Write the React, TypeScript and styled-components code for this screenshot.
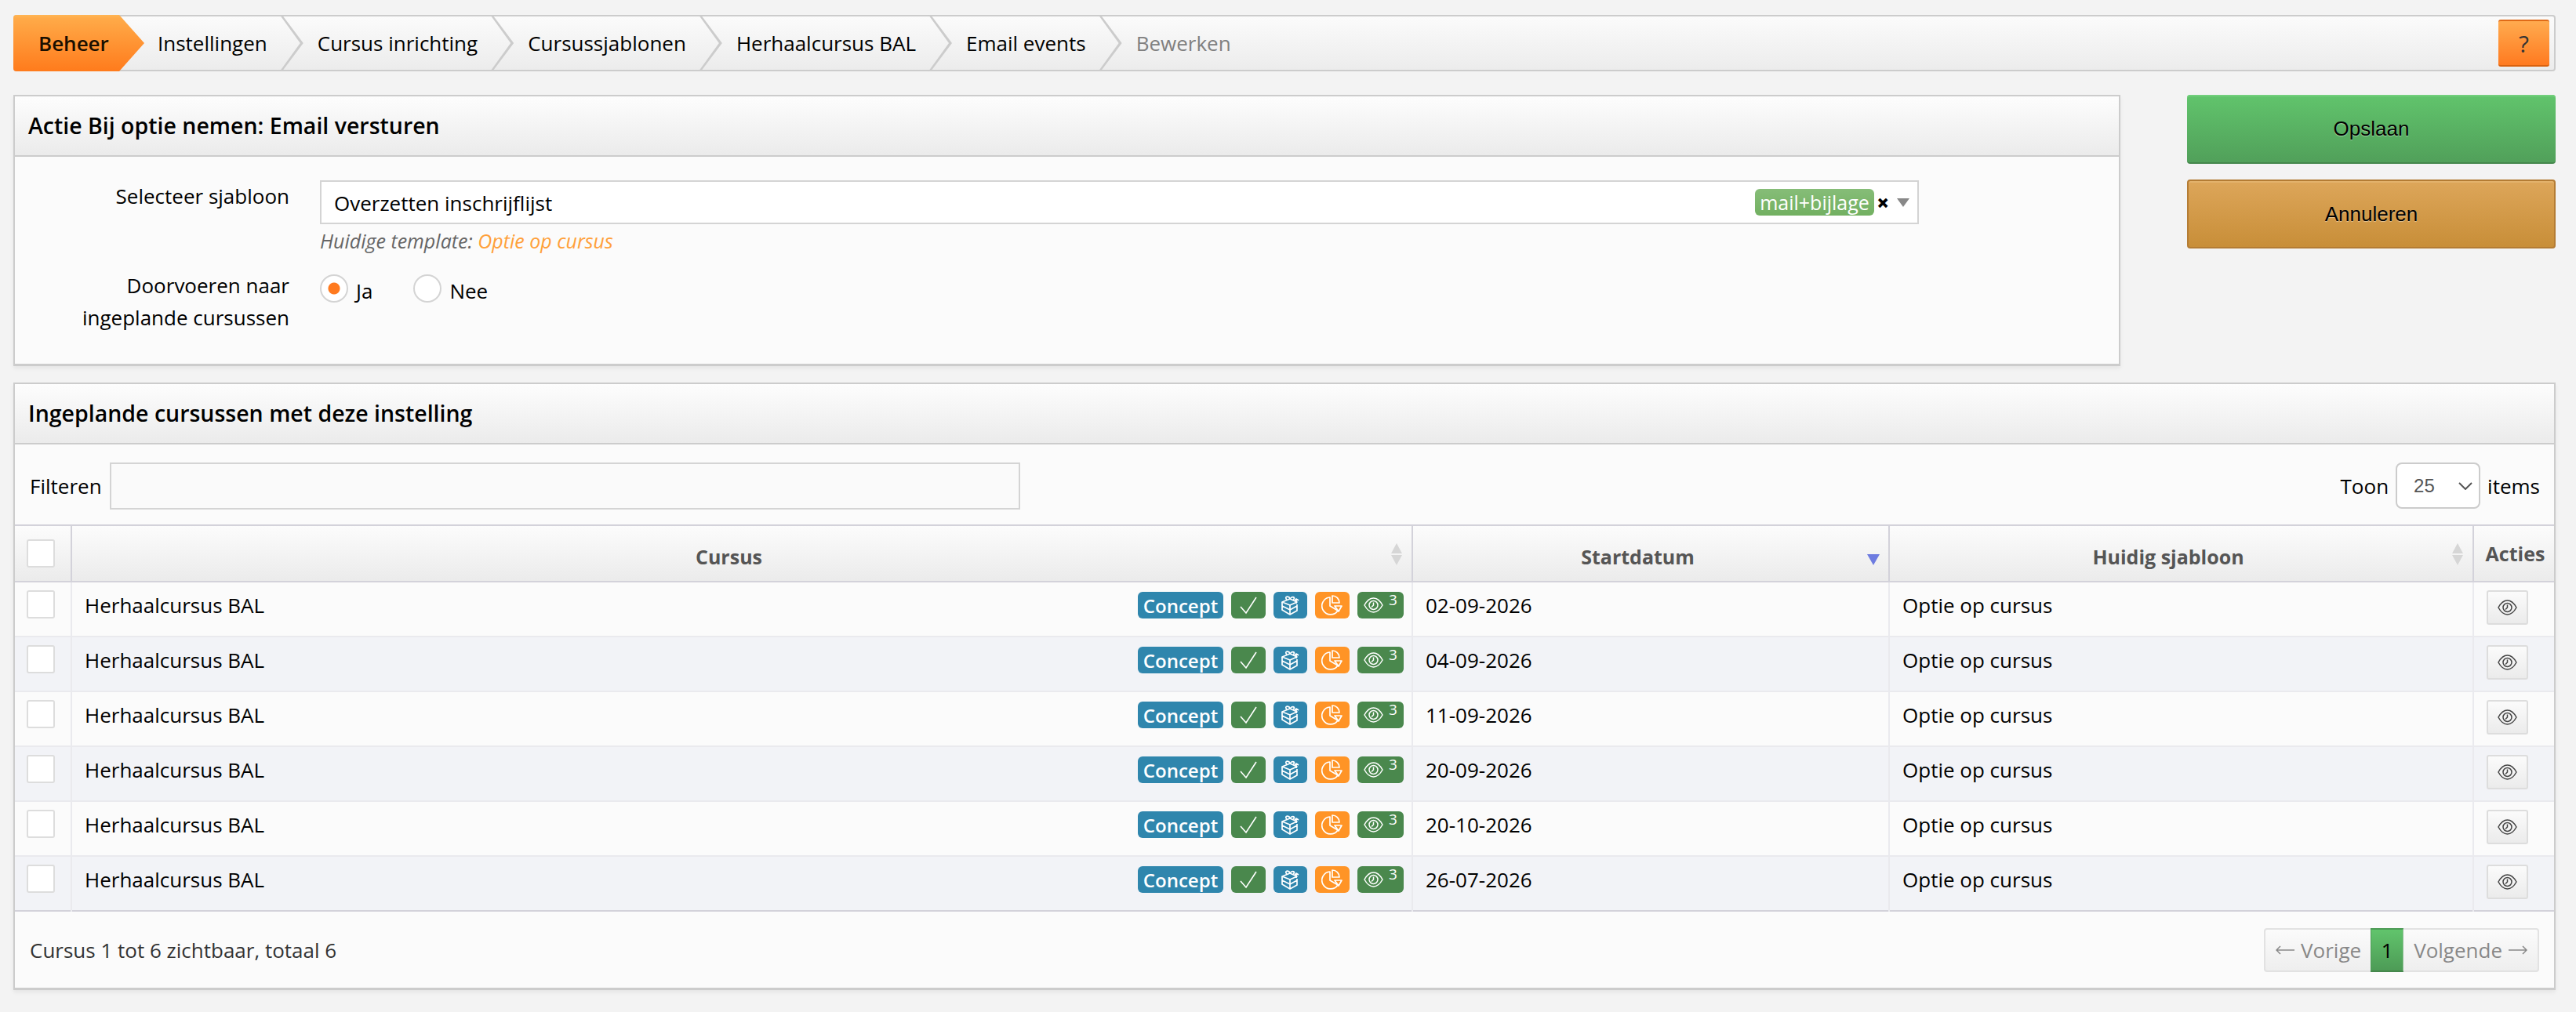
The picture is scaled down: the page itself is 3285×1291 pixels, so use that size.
import React from "react";
import styled, { createGlobalStyle } from "styled-components";

const GlobalStyle = createGlobalStyle`
  html, body {
    margin: 0;
    padding: 0;
    background: #f3f3f3;
  }
  body {
    font-family: "Open Sans", "Liberation Sans", sans-serif;
    font-size: 26px;
    color: #000;
  }
  * {
    box-sizing: border-box;
  }
`;

const Page = styled.div`
  width: 3285px;
  height: 1291px;
  padding: 19px 26px 0 17px;
  display: flex;
  flex-direction: column;
  overflow: hidden;
`;

const TopBar = styled.nav`
  height: 72px;
  display: flex;
  align-items: stretch;
  justify-content: space-between;
  border: 2px solid #ccc;
  border-left: none;
  border-radius: 4px;
  background: linear-gradient(#fbfbfb, #ececec);
`;

const Crumbs = styled.ol`
  list-style: none;
  margin: -2px 0;
  padding: 0;
  display: flex;
`;

const Crumb = styled.li<{ $muted?: boolean }>`
  position: relative;
  display: flex;
  align-items: center;
  height: 72px;
  margin-right: 48px;
  padding-right: 16px;
  white-space: nowrap;
  color: ${(p) => (p.$muted ? "#808080" : "#000")};

  &:not(:last-child)::after {
    content: "";
    position: absolute;
    z-index: 1;
    top: 0;
    left: 100%;
    width: 30px;
    height: 72px;
    background: #ccc;
    clip-path: polygon(0 0, 3px 0, 30px 50%, 3px 100%, 0 100%, 26px 50%);
  }
`;

const ActiveCrumb = styled.li`
  position: relative;
  z-index: 2;
  display: flex;
  align-items: center;
  width: 167px;
  height: 72px;
  margin-right: 17px;
  padding-left: 32px;
  border-radius: 4px 0 0 4px;
  font-weight: 600;
  color: #1a0f00;
  background: linear-gradient(#ffb655 0, #ffaa48 6%, #ff7b1c 100%);
  clip-path: polygon(0 0, 135px 0, 167px 50%, 135px 100%, 0 100%);
`;

const HelpButton = styled.button`
  width: 65px;
  height: 60px;
  margin: 4px 6px 0 0;
  padding: 0;
  border: none;
  border-top: 2px solid #e06b17;
  border-bottom: 2px solid #d9620f;
  border-radius: 3px;
  font-family: inherit;
  font-size: 30px;
  color: #333;
  background: linear-gradient(#ffab4f, #ff7a20);
`;

const MainRow = styled.div`
  display: flex;
  justify-content: space-between;
  margin-top: 30px;
`;

const Panel = styled.section<{ $grow?: boolean }>`
  width: ${(p) => (p.$grow ? "100%" : "2687px")};
  border: 2px solid #ccc;
  border-bottom-width: 3px;
  background: #fbfbfb;
  box-shadow: 0 3px 5px rgba(0, 0, 0, 0.06);
`;

const PanelHeader = styled.h2`
  margin: 0;
  height: 77px;
  padding: 0 17px 2px;
  display: flex;
  align-items: center;
  font-size: 28.5px;
  font-weight: 600;
  border-bottom: 2px solid #ccc;
  background: linear-gradient(#fdfdfd, #ebebeb);
`;

const FormBody = styled.div`
  height: 264px;
  padding: 30px 0 0;
  display: flex;
  flex-direction: column;
  gap: 21px;
`;

const FormRow = styled.div`
  display: flex;
  gap: 39px;
`;

const FormLabel = styled.div`
  width: 350px;
  text-align: right;
  line-height: 41px;
  flex: none;
`;

const FormField = styled.div`
  display: flex;
  flex-direction: column;
`;

const SelectBox = styled.div`
  position: relative;
  width: 2039px;
  height: 56px;
  display: flex;
  align-items: center;
  padding-left: 16px;
  background: #fff;
  border: 2px solid #d4d4d4;
`;

const SelectValue = styled.span`
  flex: 1;
  margin-top: 2px;
`;

const MailTag = styled.span`
  height: 34px;
  width: 152px;
  margin-right: 3px;
  display: flex;
  align-items: center;
  justify-content: center;
  border-radius: 6px;
  font-size: 25px;
  color: #fff;
  background: linear-gradient(#86bd78, #72b061);
`;

const ClearIcon = styled.span`
  width: 16px;
  font-size: 28px;
  font-weight: 800;
  line-height: 1;
  text-align: center;
  color: #000;
`;

const Caret = styled.span`
  width: 0;
  height: 0;
  margin: 0 10px 0 10px;
  border-left: 8px solid transparent;
  border-right: 8px solid transparent;
  border-top: 11px solid #888;
`;

const HelpText = styled.div`
  margin-top: 5px;
  font-size: 25px;
  line-height: 32px;
  font-style: italic;
  color: #666;
`;

const HelpLink = styled.span`
  color: #ffa03a;
`;

const RadioGroup = styled.div`
  display: flex;
  align-items: flex-start;
  gap: 52px;
  padding-top: 6px;
`;

const RadioOption = styled.label`
  display: flex;
  align-items: center;
  gap: 10px;
  height: 36px;
`;

const RadioDot = styled.span<{ $checked?: boolean }>`
  width: 36px;
  height: 36px;
  border-radius: 50%;
  border: 2px solid #d4d4d4;
  background: ${(p) =>
    p.$checked ? "radial-gradient(circle, #ff7a1f 0 7px, #fff 8px)" : "#fff"};
`;

const RadioText = styled.span`
  margin-top: 6px;
`;

const ActionColumn = styled.div`
  width: 470px;
  display: flex;
  flex-direction: column;
  gap: 20px;
`;

const ActionButton = styled.button<{ $tone: "green" | "amber" }>`
  height: 88px;
  border-radius: 4px;
  padding: 0;
  font-family: "Liberation Sans", Arial, sans-serif;
  font-size: 26px;
  color: #000;
  text-shadow: 0 1px 1px rgba(255, 255, 255, 0.45);
  border: ${(p) => (p.$tone === "amber" ? "2px solid #b47c34" : "none")};
  border-bottom: 2px solid ${(p) => (p.$tone === "green" ? "#45874c" : "#b47c34")};
  box-shadow: inset 0 2px 0 ${(p) => (p.$tone === "green" ? "#72cf7c" : "#e3b26c")};
  background: ${(p) =>
    p.$tone === "green"
      ? "linear-gradient(#61c46c, #51a05a)"
      : "linear-gradient(#dda65a, #c88e38)"};
`;

const TablePanel = styled(Panel)`
  margin-top: 21px;
  height: 775px;
`;

const Toolbar = styled.div`
  height: 102px;
  display: flex;
  align-items: center;
  justify-content: space-between;
  padding: 3px 18px 0 19px;
`;

const FilterGroup = styled.div`
  display: flex;
  align-items: center;
  gap: 10px;
`;

const FilterInput = styled.div`
  width: 1161px;
  height: 60px;
  background: #fafafa;
  border: 2px solid #d4d4d4;
`;

const PageSize = styled.div`
  display: flex;
  align-items: center;
  gap: 9px;
`;

const PageSelect = styled.div`
  width: 108px;
  height: 59px;
  padding: 0 8px 0 21px;
  display: flex;
  align-items: center;
  justify-content: space-between;
  border: 2px solid #ccc;
  border-radius: 8px;
  background: #fff;
  font-family: "Liberation Sans", Arial, sans-serif;
  font-size: 24px;
  color: #555;
`;

const Table = styled.table`
  width: 100%;
  table-layout: fixed;
  border-collapse: collapse;
  border-top: 2px solid #d3d2da;
  border-bottom: 2px solid #d3d2da;
`;

const HeadCell = styled.th<{ $width?: number; $sortable?: boolean }>`
  position: relative;
  width: ${(p) => (p.$width ? `${p.$width}px` : "auto")};
  height: 72px;
  padding: ${(p) => (p.$sortable ? "8px 33px 0 0" : "0 0 0 3px")};
  font-size: 25px;
  font-weight: 700;
  color: #555;
  text-align: center;
  background: linear-gradient(#fcfcfc, #ebebeb);
  border-left: 2px solid #d3d2da;
  border-bottom: 2px solid #d3d2da;

  &:first-child {
    border-left: none;
    padding: 0 0 0 15px;
  }
`;

const SortIcon = styled.svg`
  position: absolute;
  right: 11px;
  top: 21px;
  width: 16px;
  height: 30px;
`;

const Row = styled.tr<{ $stripe: boolean }>`
  height: 70px;
  background: ${(p) => (p.$stripe ? "#f2f3f7" : "#fbfbfb")};
  border-top: 2px solid #eaeaee;
`;

const Cell = styled.td`
  padding: 0 16px 10px;
  border-left: 2px solid #eaeaee;
  vertical-align: middle;

  &:first-child {
    border-left: none;
  }
`;

const CheckCell = styled(Cell)`
  padding: 0 0 12px 15px;
`;

const CheckBox = styled.span`
  display: block;
  width: 36px;
  height: 36px;
  background: #fff;
  border: 2px solid #ddd;
  border-radius: 3px;
`;

const CourseLine = styled.div`
  display: flex;
  align-items: center;
  justify-content: space-between;
  margin-right: -6px;
`;

const Badges = styled.div`
  display: flex;
  gap: 10px;
`;

const Badge = styled.span<{ $bg: string; $width: number }>`
  display: flex;
  align-items: center;
  justify-content: center;
  width: ${(p) => p.$width}px;
  height: 34px;
  border-radius: 6px;
  color: #fff;
  font-size: 24px;
  font-weight: 600;
  background: ${(p) => p.$bg};

  svg {
    display: block;
  }
`;

const BadgeCount = styled.sup`
  font-size: 19px;
  line-height: 1;
  font-weight: 400;
  margin: -14px 0 0 7px;
`;

const RowButton = styled.span`
  display: flex;
  align-items: center;
  justify-content: center;
  width: 53px;
  height: 44px;
  margin: 6px 0 0;
  border: 2px solid #ddd;
  border-radius: 3px;
  background: linear-gradient(#fbfbfb, #ebebeb);
`;

const Footer = styled.div`
  height: 97px;
  display: flex;
  align-items: center;
  justify-content: space-between;
  padding: 0 19px;
  color: #333;
`;

const Pager = styled.div`
  height: 56px;
  display: flex;
  font-size: 26px;
  color: #888;
`;

const PagerLink = styled.span<{ $side: "left" | "right" }>`
  display: flex;
  align-items: center;
  gap: 8px;
  padding: ${(p) => (p.$side === "left" ? "0 12px 0 13px" : "0 13px")};
  border: 2px solid #e2e2e2;
  border-${(p) => (p.$side === "left" ? "right" : "left")}: none;
  border-radius: ${(p) => (p.$side === "left" ? "4px 0 0 4px" : "0 4px 4px 0")};
  background: linear-gradient(#fbfbfb, #eeeeee);
`;

const PagerCurrent = styled.span`
  width: 42px;
  display: flex;
  align-items: center;
  justify-content: center;
  color: #000;
  background: linear-gradient(#61c46c, #4d9b56);
  border-top: 2px solid #4d9b56;
  border-bottom: 2px solid #45874c;
  border-left: 1px solid #4d9b56;
  border-right: 1px solid #8fbf94;
`;

const CheckGlyph = () => (
  <svg width="26" height="24" viewBox="0 0 26 24" fill="none" stroke="#fff" strokeWidth="1.6">
    <path d="M3 14l7 8L23 2" />
  </svg>
);

const BoxGlyph = () => (
  <svg width="28" height="26" viewBox="0 0 28 26" fill="none" stroke="#fff" strokeWidth="1.7" strokeLinejoin="round">
    <path d="M3 9l10-4 9 4-9 4z" />
    <path d="M3 9v5l10 5 9-5M3 14v5l10 6 9-5v-8" />
    <path d="M13 13v12" />
    <path d="M9 6c-3-3 0-5 3-3l1 2 2-2c3-1 5 1 2 3" />
    <path d="M21 11V5l-2 2M21 5l3 2" />
  </svg>
);

const PieGlyph = () => (
  <svg width="28" height="26" viewBox="0 0 28 26" fill="none" stroke="#fff" strokeWidth="1.7" strokeLinejoin="round">
    <path d="M11 3a11 11 0 1 0 10 17l-10-6z" />
    <path d="M14 1c5 0 9 4 9 9h-9z" />
    <path d="M17 14h9l-4 7z" />
  </svg>
);

const EyeGlyph = ({ color = "#fff" }: { color?: string }) => (
  <svg width="25" height="20" viewBox="0 0 25 20" fill="none" stroke={color} strokeWidth="1.5">
    <path d="M1 10c3-5.500 7-9 11.500-9S21 4.500 24 10c-3 5.500-7 9-11.500 9S4 15.500 1 10z" />
    <circle cx="12.500" cy="10" r="5.500" />
    <path d="M12.500 6.500V10L10 12.500" />
  </svg>
);

const ArrowLeft = () => (
  <svg width="24" height="12" viewBox="0 0 24 12" fill="none" stroke="#888" strokeWidth="1.5">
    <path d="M24 6H1M6 1L1 6l5 5" />
  </svg>
);

const ArrowRight = () => (
  <svg width="24" height="12" viewBox="0 0 24 12" fill="none" stroke="#888" strokeWidth="1.5">
    <path d="M0 6h23M18 1l5 5-5 5" />
  </svg>
);

const crumbs = [
  "Instellingen",
  "Cursus inrichting",
  "Cursussjablonen",
  "Herhaalcursus BAL",
  "Email events",
];

const dates = [
  "02-09-2026",
  "04-09-2026",
  "11-09-2026",
  "20-09-2026",
  "20-10-2026",
  "26-07-2026",
];

const Sort = () => (
  <SortIcon viewBox="0 0 16 30">
    <path d="M8 1l7 13H1zM8 29L1 16h14z" fill="#d6d6d6" />
  </SortIcon>
);

export default function App() {
  return (
    <Page>
      <GlobalStyle />
      <TopBar>
        <Crumbs>
          <ActiveCrumb>Beheer</ActiveCrumb>
          {crumbs.map((c) => (
            <Crumb key={c}>{c}</Crumb>
          ))}
          <Crumb $muted>Bewerken</Crumb>
        </Crumbs>
        <HelpButton>?</HelpButton>
      </TopBar>

      <MainRow>
        <Panel>
          <PanelHeader>Actie Bij optie nemen: Email versturen</PanelHeader>
          <FormBody>
            <FormRow>
              <FormLabel>Selecteer sjabloon</FormLabel>
              <FormField>
                <SelectBox>
                  <SelectValue>Overzetten inschrijflijst</SelectValue>
                  <MailTag>mail+bijlage</MailTag>
                  <ClearIcon>×</ClearIcon>
                  <Caret />
                </SelectBox>
                <HelpText>
                  Huidige template: <HelpLink>Optie op cursus</HelpLink>
                </HelpText>
              </FormField>
            </FormRow>
            <FormRow>
              <FormLabel>
                Doorvoeren naar
                <br />
                ingeplande cursussen
              </FormLabel>
              <RadioGroup>
                <RadioOption>
                  <RadioDot $checked />
                  <RadioText>Ja</RadioText>
                </RadioOption>
                <RadioOption>
                  <RadioDot />
                  <RadioText>Nee</RadioText>
                </RadioOption>
              </RadioGroup>
            </FormRow>
          </FormBody>
        </Panel>
        <ActionColumn>
          <ActionButton $tone="green">Opslaan</ActionButton>
          <ActionButton $tone="amber">Annuleren</ActionButton>
        </ActionColumn>
      </MainRow>

      <TablePanel $grow>
        <PanelHeader>Ingeplande cursussen met deze instelling</PanelHeader>
        <Toolbar>
          <FilterGroup>
            Filteren
            <FilterInput />
          </FilterGroup>
          <PageSize>
            Toon
            <PageSelect>
              25
              <svg width="18" height="10" viewBox="0 0 18 10" fill="none" stroke="#555" strokeWidth="2">
                <path d="M1 1l8 8 8-8" />
              </svg>
            </PageSelect>
            items
          </PageSize>
        </Toolbar>
        <Table>
          <thead>
            <tr>
              <HeadCell $width={72}>
                <CheckBox />
              </HeadCell>
              <HeadCell $width={1710} $sortable>
                Cursus
                <Sort />
              </HeadCell>
              <HeadCell $width={608} $sortable>
                Startdatum
                <SortIcon viewBox="0 0 16 30">
                  <path d="M0 15h16l-8 14z" fill="#6e7ce0" />
                </SortIcon>
              </HeadCell>
              <HeadCell $width={745} $sortable>
                Huidig sjabloon
                <Sort />
              </HeadCell>
              <HeadCell>Acties</HeadCell>
            </tr>
          </thead>
          <tbody>
            {dates.map((date, i) => (
              <Row key={i} $stripe={i % 2 === 1}>
                <CheckCell>
                  <CheckBox />
                </CheckCell>
                <Cell>
                  <CourseLine>
                    Herhaalcursus BAL
                    <Badges>
                      <Badge $bg="#2f86ad" $width={109}>Concept</Badge>
                      <Badge $bg="#4a884d" $width={44}><CheckGlyph /></Badge>
                      <Badge $bg="#2f86ad" $width={43}><BoxGlyph /></Badge>
                      <Badge $bg="#ff9426" $width={44}><PieGlyph /></Badge>
                      <Badge $bg="#4a884d" $width={59}>
                        <EyeGlyph />
                        <BadgeCount>3</BadgeCount>
                      </Badge>
                    </Badges>
                  </CourseLine>
                </Cell>
                <Cell>{date}</Cell>
                <Cell>Optie op cursus</Cell>
                <Cell>
                  <RowButton>
                    <EyeGlyph color="#444" />
                  </RowButton>
                </Cell>
              </Row>
            ))}
          </tbody>
        </Table>
        <Footer>
          Cursus 1 tot 6 zichtbaar, totaal 6
          <Pager>
            <PagerLink $side="left"><ArrowLeft /> Vorige</PagerLink>
            <PagerCurrent>1</PagerCurrent>
            <PagerLink $side="right">Volgende <ArrowRight /></PagerLink>
          </Pager>
        </Footer>
      </TablePanel>
    </Page>
  );
}
